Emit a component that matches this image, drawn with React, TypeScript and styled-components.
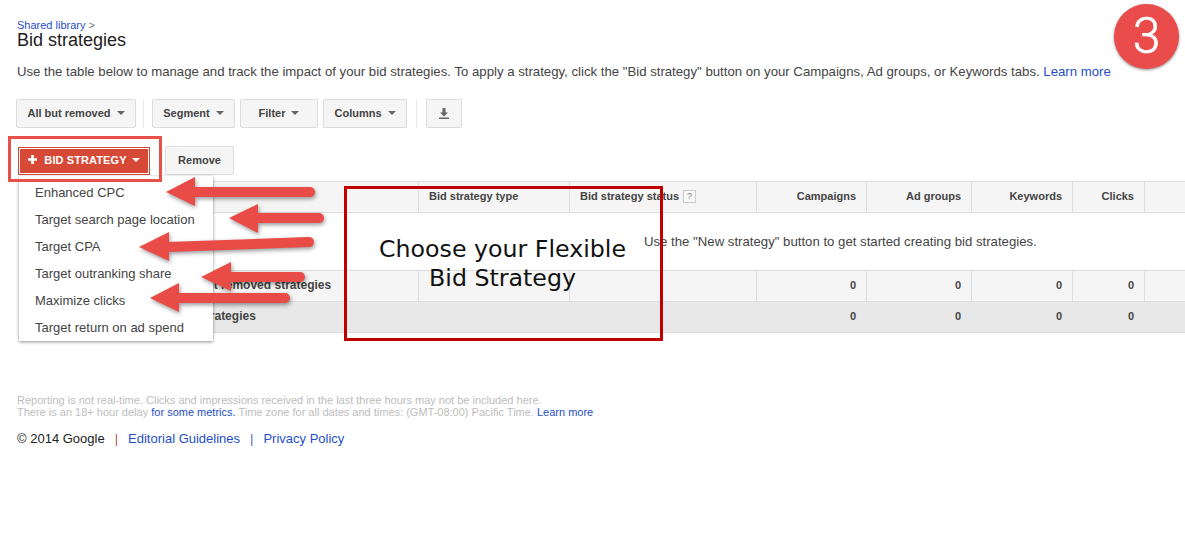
import React from "react";
import styled, { createGlobalStyle } from "styled-components";

const Global = createGlobalStyle`
  html, body { margin: 0; padding: 0; background: #fff; }
  body { font-family: "Liberation Sans", Arial, sans-serif; color: #444; overflow: hidden; }
`;

const Page = styled.div`
  position: relative;
  width: 1185px;
  height: 543px;
  overflow: hidden;
  padding-top: 19px;
  box-sizing: border-box;
`;
const Head = styled.header`
  padding-left: 17px;
`;
const Crumb = styled.div`
  font-size: 11px;
  line-height: 13px;
  color: #777;
`;
const BlueLink = styled.a`
  color: #1f4fc8;
  text-decoration: none;
`;
const Title = styled.h1`
  margin: -3px 0 0;
  font-size: 18px;
  font-weight: 400;
  line-height: 22px;
  color: #222;
`;
const Intro = styled.p`
  margin: 13px 0 0;
  font-size: 13.2px;
  line-height: 16px;
  color: #444;
  white-space: nowrap;
`;
const Toolbar = styled.div`
  display: flex;
  align-items: center;
  gap: 5px;
  margin-top: 19px;
  padding-left: 16px;
`;
const Btn = styled.button<{ $w: number }>`
  display: flex;
  align-items: center;
  justify-content: center;
  gap: 6px;
  width: ${(p) => p.$w}px;
  height: 29px;
  box-sizing: border-box;
  padding: 0 0 2px;
  background: #f5f5f5;
  border: 1px solid #dcdcdc;
  border-radius: 2px;
  font: bold 11px "Liberation Sans", Arial, sans-serif;
  color: #444;
`;
const Caret = styled.i<{ $c?: string }>`
  display: block;
  width: 0;
  height: 0;
  border-left: 4px solid transparent;
  border-right: 4px solid transparent;
  border-top: 4px solid ${(p) => p.$c || "#666"};
`;
const Divider = styled.span<{ $l: number; $r: number }>`
  width: 1px;
  height: 29px;
  background: #e8e8e8;
  margin: 0 ${(p) => p.$r}px 0 ${(p) => p.$l}px;
`;
const ActionRow = styled.div`
  display: flex;
  align-items: flex-start;
  gap: 15px;
  margin-top: 18px;
  padding-left: 18px;
`;
const PrimaryBtn = styled.button`
  display: flex;
  align-items: center;
  justify-content: center;
  gap: 5px;
  width: 132px;
  height: 28px;
  box-sizing: border-box;
  margin-top: 1px;
  padding: 0 0 3px;
  background: #d64937;
  border: 1px solid #d14836;
  box-shadow: inset 0 0 0 1px #fff;
  font: bold 11px "Liberation Sans", Arial, sans-serif;
  letter-spacing: 0.1px;
  color: #fff;
`;
const PlusIcon = styled.svg`
  margin-right: 2px;
`;
const Table = styled.div`
  margin: 6px 0 0 19px;
  border-top: 1px solid #ddd;
`;
const Row = styled.div<{ $bg: string }>`
  display: grid;
  grid-template-columns: 400px 151px 187px 110px 105px 101px 72px 1fr;
  height: 30px;
  background: ${(p) => p.$bg};
  border-bottom: 1px solid #ddd;
`;
const Cell = styled.div<{ $right?: boolean; $plain?: boolean }>`
  display: flex;
  align-items: center;
  justify-content: ${(p) => (p.$right ? "flex-end" : "flex-start")};
  gap: 4px;
  padding: 0 ${(p) => (p.$right ? "10px" : "0")} 2px ${(p) => (p.$right ? "0" : "10px")};
  border-right: 1px solid ${(p) => (p.$plain ? "transparent" : "#ddd")};
  font-size: 11px;
  font-weight: bold;
  color: #444;
  white-space: nowrap;
`;
const LabelCell = styled(Cell)`
  padding-left: 125px;
  font-size: 12px;
`;
const Help = styled.span`
  display: inline-block;
  width: 11px;
  height: 11px;
  border: 1px solid #ccc;
  background: #f9f9f9;
  color: #777;
  font-size: 9px;
  line-height: 11px;
  text-align: center;
  font-weight: normal;
`;
const EmptyRow = styled.div`
  height: 57px;
  border-bottom: 1px solid #ddd;
  padding-left: 625px;
  display: flex;
  align-items: center;
  font-size: 13.2px;
  color: #444;
`;
const Notes = styled.div`
  margin: 61px 0 0 17px;
  font-size: 11px;
  line-height: 12px;
  color: #bdbdbd;
`;
const Footer = styled.div`
  display: flex;
  margin: 13px 0 0 17px;
  font-size: 13px;
  line-height: 16px;
  color: #222;
`;
const Sep = styled.span<{ $c: string }>`
  margin: 0 10px;
  color: ${(p) => p.$c};
`;
const Menu = styled.ul`
  position: absolute;
  left: 19px;
  top: 176px;
  width: 194px;
  margin: 0;
  padding: 3px 0 0;
  height: 165px;
  box-sizing: border-box;
  list-style: none;
  background: #fff;
  box-shadow: 0 1px 3px rgba(0, 0, 0, 0.45);
`;
const MenuItem = styled.li`
  height: 27px;
  line-height: 27px;
  padding-left: 16px;
  font-size: 13px;
  color: #444;
  white-space: nowrap;
`;
const RedFrame = styled.div`
  position: absolute;
  left: 8px;
  top: 136px;
  width: 154px;
  height: 46px;
  box-sizing: border-box;
  border: 3px solid #e8504a;
`;
const CalloutBox = styled.div`
  position: absolute;
  left: 344px;
  top: 186px;
  width: 319px;
  height: 155px;
  box-sizing: border-box;
  border: 3px solid #c00000;
  padding: 46px 2px 0 0;
  font-family: "DejaVu Sans", Verdana, sans-serif;
  font-size: 23.7px;
  line-height: 29px;
  color: #111;
  text-align: center;
`;
const Badge = styled.div`
  position: absolute;
  left: 1114px;
  top: 4px;
  width: 65px;
  height: 65px;
  border-radius: 50%;
  background: #ea4c4c;
  box-shadow: 0 1px 3px rgba(0, 0, 0, 0.45);
  color: #fff;
  font-family: Roboto, sans-serif;
  font-weight: 300;
  -webkit-text-stroke: 0.6px #fff;
  font-size: 50px;
  line-height: 65px;
  text-align: center;
`;
const ArrowLayer = styled.svg`
  position: absolute;
  left: 0;
  top: 0;
  pointer-events: none;
  filter: drop-shadow(1px 2px 2px rgba(0, 0, 0, 0.4));
`;

const arrows = [
  { tip: [166, 192], head: 195, ht: 177, hb: 206, end: 315, y1: 192, y2: 192 },
  { tip: [229, 218], head: 258, ht: 204, hb: 233, end: 324, y1: 218, y2: 218 },
  { tip: [139, 247], head: 169, ht: 232, hb: 261, end: 314, y1: 247, y2: 242 },
  { tip: [201, 277], head: 231, ht: 262, hb: 291, end: 305, y1: 277, y2: 277 },
  { tip: [150, 298], head: 179, ht: 283, hb: 312, end: 290, y1: 298, y2: 298 },
];

export default function App() {
  return (
    <Page>
      <Global />
      <Head>
        <Crumb>
          <BlueLink>Shared library</BlueLink> &gt;
        </Crumb>
        <Title>Bid strategies</Title>
        <Intro>
          Use the table below to manage and track the impact of your bid strategies. To apply a strategy, click the
          "Bid strategy" button on your Campaigns, Ad groups, or Keywords tabs. <BlueLink>Learn more</BlueLink>
        </Intro>
      </Head>
      <Toolbar>
        <Btn $w={120}>All but removed <Caret /></Btn>
        <Divider $l={2} $r={3} />
        <Btn $w={83}>Segment <Caret /></Btn>
        <Btn $w={78}>Filter <Caret /></Btn>
        <Btn $w={84}>Columns <Caret /></Btn>
        <Divider $l={4} $r={4} />
        <Btn $w={36} aria-label="Download">
          <svg width="12" height="12" viewBox="0 0 12 12">
            <path d="M4.5 1h3v4.5H10L6 9.5 2 5.5h2.5z M1 10.5h10V12H1z" fill="#666" />
          </svg>
        </Btn>
      </Toolbar>
      <ActionRow>
        <PrimaryBtn>
          <PlusIcon width="9" height="9" viewBox="0 0 10 10">
            <path d="M3.5 0h3v3.5H10v3H6.500V10h-3V6.500H0v-3h3.500z" fill="#fff" />
          </PlusIcon>
          BID STRATEGY
          <Caret $c="#fff" />
        </PrimaryBtn>
        <Btn $w={69}>Remove</Btn>
      </ActionRow>
      <Table>
        <Row $bg="#f5f5f5">
          <Cell />
          <Cell>Bid strategy type</Cell>
          <Cell>Bid strategy status <Help>?</Help></Cell>
          <Cell $right>Campaigns</Cell>
          <Cell $right>Ad groups</Cell>
          <Cell $right>Keywords</Cell>
          <Cell $right>Clicks</Cell>
          <Cell $plain />
        </Row>
        <EmptyRow>Use the "New strategy" button to get started creating bid strategies.</EmptyRow>
        <Row $bg="#f5f5f5">
          <LabelCell>Total - all but removed strategies</LabelCell>
          <Cell />
          <Cell />
          <Cell $right>0</Cell>
          <Cell $right>0</Cell>
          <Cell $right>0</Cell>
          <Cell $right>0</Cell>
          <Cell $plain />
        </Row>
        <Row $bg="#e8e8e8">
          <LabelCell $plain>Total - all strategies</LabelCell>
          <Cell $plain />
          <Cell $plain />
          <Cell $right $plain>0</Cell>
          <Cell $right $plain>0</Cell>
          <Cell $right $plain>0</Cell>
          <Cell $right $plain>0</Cell>
          <Cell $plain />
        </Row>
      </Table>
      <Notes>
        Reporting is not real-time. Clicks and impressions received in the last three hours may not be included here.
        <br />
        There is an 18+ hour delay <BlueLink>for some metrics.</BlueLink> Time zone for all dates and times: (GMT-08:00)
        Pacific Time. <BlueLink>Learn more</BlueLink>
      </Notes>
      <Footer>
        © 2014 Google
        <Sep $c="#b5523f">|</Sep>
        <BlueLink>Editorial Guidelines</BlueLink>
        <Sep $c="#4a6fb5">|</Sep>
        <BlueLink>Privacy Policy</BlueLink>
      </Footer>
      <Menu>
        <MenuItem>Enhanced CPC</MenuItem>
        <MenuItem>Target search page location</MenuItem>
        <MenuItem>Target CPA</MenuItem>
        <MenuItem>Target outranking share</MenuItem>
        <MenuItem>Maximize clicks</MenuItem>
        <MenuItem>Target return on ad spend</MenuItem>
      </Menu>
      <RedFrame />
      <ArrowLayer width="1185" height="543" viewBox="0 0 1185 543">
        {arrows.map((a, i) => (
          <g key={i} fill="#e94c47">
            <polygon points={`${a.tip[0]},${a.tip[1]} ${a.head},${a.ht} ${a.head},${a.hb}`} />
            <line x1={a.head - 2} y1={a.y1} x2={a.end - 5} y2={a.y2} stroke="#e94c47" strokeWidth={10} strokeLinecap="round" />
          </g>
        ))}
      </ArrowLayer>
      <CalloutBox>
        Choose your Flexible
        <br />
        Bid Strategy
      </CalloutBox>
      <Badge>3</Badge>
    </Page>
  );
}
